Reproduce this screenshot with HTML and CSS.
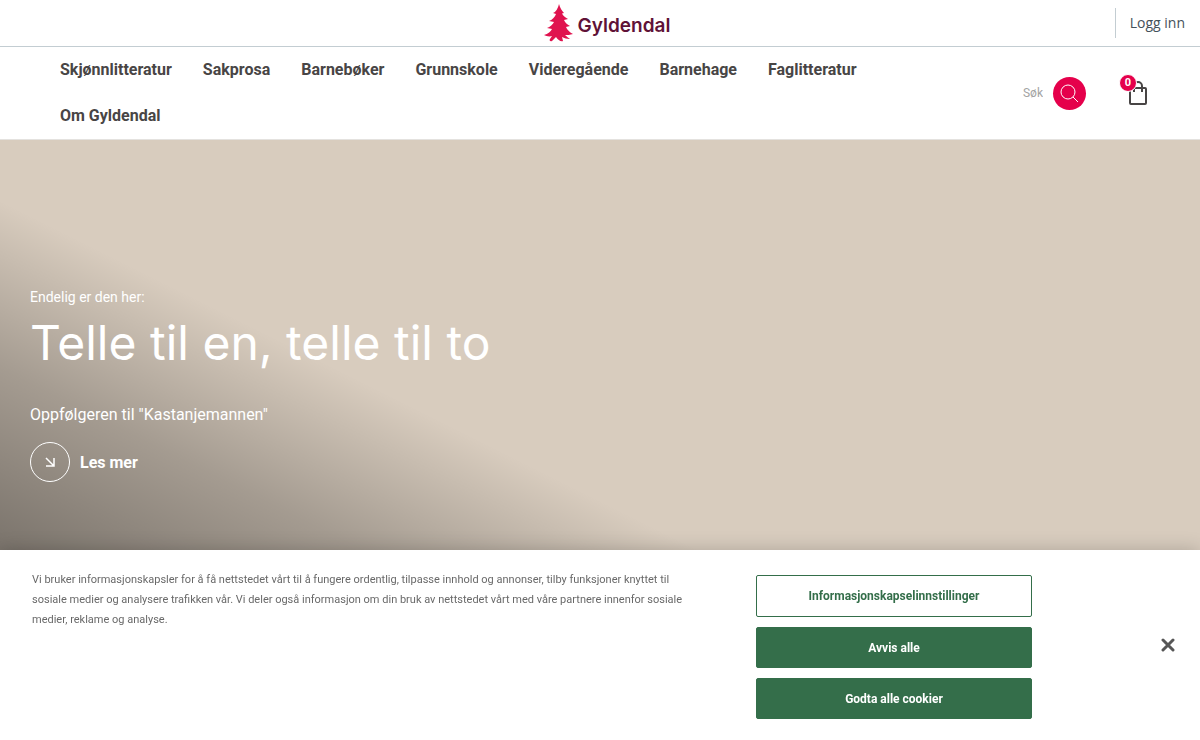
FILE: index.html
```
<!DOCTYPE html>
<html lang="nb">
<head>
    <meta charset="UTF-8">
    <meta name="viewport" content="width=device-width, initial-scale=1">
    <title>Gyldendal</title>
    <link rel="stylesheet" href="styles.css">
</head>
<body>
    <header>
        <div class="topbar">
            <a class="logo" href="#">
                <svg width="29" height="38" viewBox="0 0 29 38" aria-hidden="true">
                    <path d="M15 0 C16 4 18 7 20 9 L18 9.500 C19 12 22 14 24 15 L20 16 C21 19 24 21 26 22 L22 23 C23 26 27 29 29 30 C26 31 23 31 21 31 C23 33 25 34 26 35 C23 35 20 34 18 33 L19 37 C17 38 14 36 12 33 L8 37 C6 38 5 36 6 35 L8 32 C5 33 2 32 0 31 C4 30 7 27 8 25 L3 24 C6 23 9 20 10 18 L5 17 C8 16 11 13 12 10 L9 9 C12 8 14 4 15 0 Z"/>
                </svg>
                <span>Gyldendal</span>
            </a>
            <a class="login" href="#">Logg inn</a>
        </div>
        <div class="mainbar">
            <nav>
                <ul>
                    <li><a href="#">Skjønnlitteratur</a></li>
                    <li><a href="#">Sakprosa</a></li>
                    <li><a href="#">Barnebøker</a></li>
                    <li><a href="#">Grunnskole</a></li>
                    <li><a href="#">Videregående</a></li>
                    <li><a href="#">Barnehage</a></li>
                    <li><a href="#">Faglitteratur</a></li>
                    <li><a href="#">Om Gyldendal</a></li>
                </ul>
            </nav>
            <form class="search">
                <input type="text" placeholder="Søk" aria-label="Søk">
                <button type="button" aria-label="Søk">
                    <svg width="19" height="19" viewBox="0 0 19 19" aria-hidden="true">
                        <circle cx="8" cy="8" r="7"/>
                        <path d="M13 13 L18 18"/>
                    </svg>
                </button>
            </form>
            <a class="cart" href="#" aria-label="Handlekurv">
                <svg width="20" height="26" viewBox="0 0 20 26" aria-hidden="true">
                    <rect x="2" y="8" width="16" height="16" rx="1"/>
                    <path d="M6 12 V6 a4 4 0 0 1 8 0 V12"/>
                </svg>
                <span class="count">0</span>
            </a>
        </div>
    </header>
    <main class="hero">
        <p class="kicker">Endelig er den her:</p>
        <h1>Telle til en, telle til to</h1>
        <p class="intro">Oppfølgeren til "Kastanjemannen"</p>
        <a class="more" href="#">
            <span class="circle">
                <svg width="10" height="10" viewBox="0 0 10 10" aria-hidden="true">
                    <path d="M1 1 L9 9 M9 1 V9 H1"/>
                </svg>
            </span>
            Les mer
        </a>
    </main>
    <section class="cookies" aria-label="Informasjonskapsler">
        <p>Vi bruker informasjonskapsler for å få nettstedet vårt til å fungere ordentlig, tilpasse innhold og annonser, tilby funksjoner knyttet til sosiale medier og analysere trafikken vår. Vi deler også informasjon om din bruk av nettstedet vårt med våre partnere innenfor sosiale medier, reklame og analyse.</p>
        <div class="buttons">
            <button type="button" class="settings">Informasjonskapselinnstillinger</button>
            <button type="button">Avvis alle</button>
            <button type="button">Godta alle cookier</button>
        </div>
        <button type="button" class="close" aria-label="Lukk">
            <svg width="14" height="14" viewBox="0 0 14 14" aria-hidden="true">
                <path d="M2 2 L12 12 M12 2 L2 12"/>
            </svg>
        </button>
    </section>
</body>
</html>
```
FILE: styles.css
```
*{box-sizing: border-box;}
body,h1,p,ul{margin: 0; padding: 0;}
body{background: #fff; color: #484545; font-family: Roboto, sans-serif; overflow: hidden;}
ul{list-style: none;}
a{color: inherit; text-decoration: none;}
button,input{font-family: inherit; border: 0; padding: 0;}
button{cursor: pointer;}
svg{display: block; fill: none; stroke: currentColor;}

.topbar{display: grid; grid-template-columns: 1fr auto 1fr; align-items: center; height: 47px; padding: 0 15px; border-bottom: 1px solid #c3cdd2;}
.logo{grid-column: 2; display: flex; align-items: flex-end; gap: 5px; padding-left: 14px; color: #5f1237; font: 600 19px/32px Inter, sans-serif;}
.logo svg{fill: #e0134f; stroke: none;}
.login{justify-self: end; padding-left: 14px; border-left: 1px solid #c3cdd2; color: #44515a; font: 14px/30px "Open Sans", sans-serif;}

.mainbar{display: flex; align-items: center; padding-right: 52px; border-bottom: 1px solid #e4e2df;}
.mainbar nav{flex: 1; padding: 0 30px 0 60px;}
.mainbar ul{display: flex; flex-wrap: wrap; column-gap: 31px;}
.mainbar li{font-size: 16px; font-weight: 700; line-height: 46px;}
.search{display: flex; align-items: center; gap: 10px;}
.search input{width: 60px; font-size: 12px; text-align: right; background: none;}
.search input::placeholder{color: #a3a3a3; opacity: 1;}
.search button{display: grid; place-items: center; width: 33px; height: 33px; border-radius: 50%; background: #e5004b; color: #fff;}
.cart{position: relative; margin-left: 42px;}
.cart svg{stroke-width: 2;}
.cart .count{position: absolute; top: -6px; left: -9px; width: 18px; border: 1px solid #fff; border-radius: 50%; background: #e5004b; color: #fff; font-size: 11px; font-weight: 700; line-height: 16px; text-align: center;}

.hero{min-height: 600px; padding: 147px 30px 0; color: #fff; background: linear-gradient(to bottom left, rgba(0,0,0,0) 55%, rgba(0,0,0,.24) 69%, rgba(0,0,0,.43) 84%, rgba(0,0,0,.6) 100%) #d8ccbe;}
.kicker{font-size: 14px; line-height: 20px;}
.hero h1{font: 400 48px/64px Inter, sans-serif; margin-top: 4px;}
.intro{margin-top: 29px; font-size: 16px; line-height: 22px;}
.more{display: inline-flex; align-items: center; gap: 10px; margin-top: 16px; font-size: 16px; font-weight: 700;}
.more .circle{display: grid; place-items: center; width: 40px; height: 40px; border: 1px solid #fff; border-radius: 50%;}
.more svg{stroke-width: 1.5;}

.cookies{position: fixed; left: 0; right: 0; bottom: 0; display: flex; align-items: center; padding: 20px 25px 21px 32px; background: #fff; box-shadow: 0 0 18px rgba(0,0,0,.2);}
.cookies p{flex: 1; align-self: flex-start; max-width: 670px; color: #696969; font-size: 11px; line-height: 20px;}
.cookies .buttons{display: flex; flex-direction: column; flex: none; gap: 10px; width: 276px; margin: 5px 0 0 54px;}
.cookies .buttons button{height: 41px; border: 1px solid #346e4a; border-radius: 2px; background: #346e4a; color: #fff; font-size: 12px; font-weight: 700;}
.cookies .buttons .settings{height: 42px; background: #fff; color: #346e4a;}
.cookies .close{margin-left: auto; background: none; color: #565656;}
.cookies .close svg{stroke-width: 3; stroke-linecap: round;}
```
